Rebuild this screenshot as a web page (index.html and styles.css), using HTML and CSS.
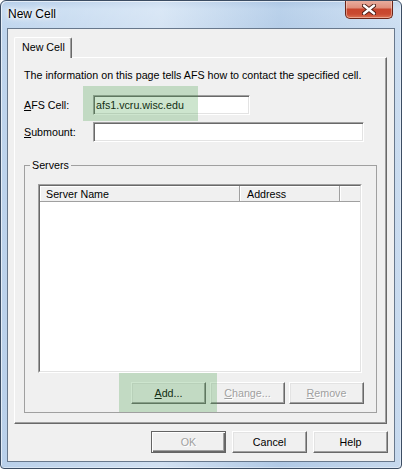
FILE: index.html
```html
<!DOCTYPE html>
<html>
<head>
<meta charset="utf-8">
<link rel="stylesheet" href="styles.css">
</head>
<body>
<div class="window">
  <div class="titlebar">
    <span class="title">New Cell</span>
    <div class="close">
      <svg width="14" height="11" viewBox="0 0 14 11">
        <path d="M2 1.5 L12 9.5 M12 1.5 L2 9.5" stroke="#4a1a12" stroke-width="4.2" stroke-linecap="round"/>
        <path d="M2 1.5 L12 9.5 M12 1.5 L2 9.5" stroke="#ffffff" stroke-width="2.4" stroke-linecap="round"/>
      </svg>
    </div>
  </div>
  <div class="client">
    <div class="tabs"><div class="tab">New Cell</div></div>
    <div class="panel">
      <p class="intro">The information on this page tells AFS how to contact the specified cell.</p>
      <div class="field"><span class="lbl"><u>A</u>FS Cell:</span><div class="input cell">afs1.vcru.wisc.edu</div></div>
      <div class="field second"><span class="lbl"><u>S</u>ubmount:</span><div class="input wide"></div></div>
      <fieldset class="group">
        <legend>Servers</legend>
        <div class="list">
          <div class="list-inner">
            <div class="lv-head">
              <div class="col c1">Server Name</div>
              <div class="col c2">Address</div>
              <div class="col c3"></div>
            </div>
          </div>
        </div>
        <div class="btnrow">
          <button class="btn"><u>A</u>dd...</button>
          <button class="btn disabled"><u>C</u>hange...</button>
          <button class="btn disabled"><u>R</u>emove</button>
        </div>
      </fieldset>
    </div>
    <div class="dlg-buttons">
      <button class="btn disabled default">OK</button>
      <button class="btn">Cancel</button>
      <button class="btn">Help</button>
    </div>
  </div>
  <div class="hl hl-cell"></div>
  <div class="hl hl-add"></div>
</div>
</body>
</html>
```
FILE: styles.css
```css
html, body {
  margin: 0;
  padding: 0;
  background: #ffffff;
}
body {
  font-family: "Liberation Sans", Arial, sans-serif;
  font-size: 10.7px;
  color: #000;
}
.window {
  position: relative;
  width: 402px;
  height: 469px;
  box-sizing: border-box;
  border: 1px solid #3c4d63;
  border-radius: 6px 6px 4px 4px;
  padding: 0 6px 6px;
  display: flex;
  flex-direction: column;
  overflow: hidden;
  background:
    linear-gradient(90deg, rgba(255,255,255,0.0) 0, rgba(255,255,255,0.35) 40%, rgba(150,180,215,0.25) 70%, rgba(255,255,255,0.2) 100%),
    linear-gradient(180deg, #b3cce8 0, #c6dbf1 8px, #bfd5ed 30px, #b9d0ea 100%);
  box-shadow: inset 1px 1px 0 rgba(255,255,255,0.6), inset -1px -1px 0 rgba(255,255,255,0.4);
}
.titlebar {
  height: 27px;
  margin: 0 -6px;
  padding: 0 8px 0 7px;
  display: flex;
  align-items: flex-start;
  justify-content: space-between;
}
.title {
  font-size: 12px;
  line-height: 15px;
  padding-top: 6px;
  text-shadow: 0 0 5px #fff, 0 0 3px #fff, 0 0 8px #fff;
}
.close {
  width: 48px;
  height: 19px;
  margin-top: -1px;
  box-sizing: border-box;
  border: 1px solid #6b2518;
  border-top: none;
  border-radius: 0 0 5px 5px;
  background: linear-gradient(180deg, #eab0a2 0%, #e0907d 42%, #c8452d 52%, #c94a31 78%, #dc7354 100%);
  box-shadow: inset 0 0 0 1px rgba(255,230,220,0.45);
  display: flex;
  align-items: center;
  justify-content: center;
}
.client {
  flex: 1;
  border: 1px solid #68788c;
  background: #f0f0f0;
  padding: 8px 7px 8px 6px;
  display: flex;
  flex-direction: column;
}
.tabs {
  display: flex;
}
.tab {
  width: 58px;
  height: 21px;
  box-sizing: border-box;
  margin-bottom: -1px;
  position: relative;
  z-index: 1;
  background: #f0f0f0;
  border-top: 1px solid #fff;
  border-left: 1px solid #fff;
  border-right: 1px solid #696969;
  border-radius: 2px 2px 0 0;
  box-shadow: inset -1px 0 0 #a0a0a0;
  padding: 3px 0 0 7px;
  line-height: 13px;
}
.panel {
  height: 367px;
  box-sizing: border-box;
  border: 1px solid;
  border-color: #fff #696969 #696969 #fff;
  box-shadow: inset -1px -1px 0 #a0a0a0;
  padding: 11px 9px 0 9px;
}
.intro {
  margin: 0;
  line-height: 13px;
  white-space: nowrap;
}
.field {
  display: flex;
  align-items: center;
  margin-top: 13px;
}
.field.second {
  margin-top: 7px;
}
.lbl {
  width: 69px;
  line-height: 13px;
}
.input {
  height: 20px;
  box-sizing: border-box;
  border: 1px solid;
  border-color: #a0a0a0 #fff #fff #a0a0a0;
  box-shadow: inset 1px 1px 0 #696969, inset -1px -1px 0 #e3e3e3;
  background: #fff;
  line-height: 18px;
  padding-left: 2px;
}
.input.cell {
  width: 157px;
}
.input.wide {
  width: 271px;
}
.group {
  margin: 17px 0 0;
  padding: 12px 14px 8px 5px;
  border: 1px solid #a0a0a0;
  min-width: 0;
}
.group legend {
  padding: 0 2px;
  line-height: 13px;
}
.list {
  margin-left: 8px;
  height: 189px;
  box-sizing: border-box;
  border: 1px solid;
  border-color: #a0a0a0 #fff #fff #a0a0a0;
}
.list-inner {
  height: 100%;
  box-sizing: border-box;
  border: 1px solid;
  border-color: #696969 #e3e3e3 #e3e3e3 #696969;
  background: #fff;
}
.lv-head {
  display: flex;
  height: 16px;
  background: #f0f0f0;
}
.col {
  box-sizing: border-box;
  height: 16px;
  padding-top: 1px;
  line-height: 14px;
  border-bottom: 1px solid #a0a0a0;
  border-right: 1px solid #a0a0a0;
  box-shadow: inset 1px 1px 0 #fff;
  padding-left: 6px;
  white-space: nowrap;
}
.c1 { width: 200px; }
.c2 { width: 100px; padding-left: 7px; }
.c3 { flex: 1; border-right: none; }
.btnrow {
  display: flex;
  justify-content: flex-end;
  gap: 4px;
  margin-top: 9px;
  margin-right: -2px;
}
.btn {
  width: 75px;
  height: 22px;
  box-sizing: border-box;
  border: 1px solid;
  border-color: #fff #696969 #696969 #fff;
  box-shadow: inset -1px -1px 0 #a0a0a0, inset 1px 1px 0 #e3e3e3;
  background: #f0f0f0;
  font: inherit;
  color: #000;
  padding: 0;
  line-height: 13px;
}
.btn.disabled {
  color: #a0a0a0;
  text-shadow: 1px 1px 0 #fff;
}
.btn.default {
  border-color: #646464;
  box-shadow: inset 1px 1px 0 #fff, inset -1px -1px 0 #696969, inset -2px -2px 0 #a0a0a0;
}
.dlg-buttons {
  display: flex;
  justify-content: flex-end;
  gap: 6px;
  margin-top: 7px;
  margin-right: -1px;
}
.hl {
  position: absolute;
  background: rgba(70, 160, 75, 0.27);
  pointer-events: none;
}
.hl-cell {
  left: 82px;
  top: 85px;
  width: 115px;
  height: 35px;
}
.hl-add {
  left: 118px;
  top: 372px;
  width: 98px;
  height: 39px;
}
```
